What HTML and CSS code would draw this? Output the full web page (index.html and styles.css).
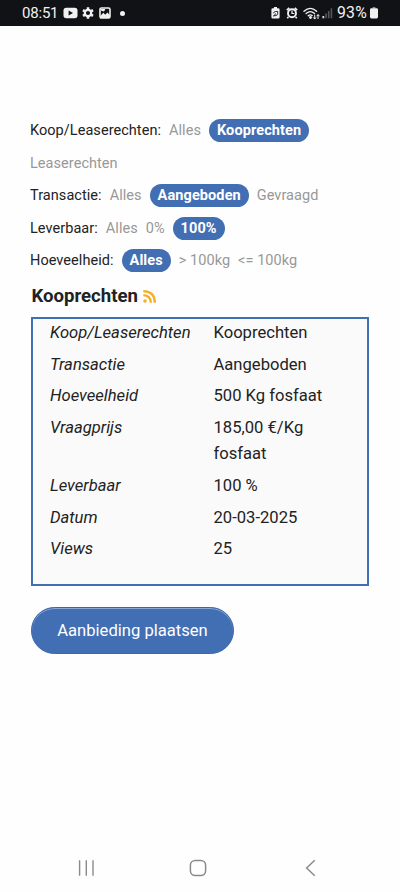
FILE: index.html
```html
<!DOCTYPE html>
<html lang="nl">
<head>
<meta charset="utf-8">
<title>Kooprechten</title>
<link rel="stylesheet" href="styles.css">
</head>
<body>
<div class="screen">
  <header class="status">
    <span class="clock">08:51</span>
    <svg class="i-video" width="15" height="12" viewBox="0 0 15 12"><rect x=".5" y=".7" width="14" height="10.6" rx="2.8" fill="#f1f1f1"/><path d="M5.6 3.5 10 6 5.6 8.5Z" fill="#111215"/></svg>
    <svg class="i-gear" width="12" height="12" viewBox="0 0 12 12"><circle cx="6" cy="6" r="3.2" fill="none" stroke="#f1f1f1" stroke-width="2.2"/><g stroke="#f1f1f1" stroke-width="2.6"><path d="M6 .2v2M6 9.8v2M.98 3.1l1.7 1M9.3 7.9l1.7 1M.98 8.9l1.7-1M9.3 4.1l1.7-1"/></g></svg>
    <svg class="i-image" width="12" height="12" viewBox="0 0 12 12"><rect x="1" y="1" width="10" height="10" rx="1.4" fill="none" stroke="#f1f1f1" stroke-width="1.6"/><path d="M1.2 9.2 4.3 5.8l2 2 2.1-2.3 2.4 2.6V11H1.2Z" fill="#f1f1f1"/><path d="M2 2h4v1.2L4.4 4.6 2 3.4Z" fill="#f1f1f1"/></svg>
    <span class="dot"></span>
    <div class="status-right">
      <svg width="9" height="12" viewBox="0 0 9 12"><path d="M3 0h3v1.2h1.2Q8.6 1.2 8.6 2.6v7.6q0 1.4-1.4 1.4H1.8Q.4 11.6.4 10.2V2.6q0-1.4 1.4-1.4H3Z" fill="#f1f1f1"/><path d="M2.4 6.3Q3 4.5 4.6 4.5H6.7V6.7Q6.4 8.7 4.2 8.7H2.6M2.2 9.3 5 6.5" fill="none" stroke="#111215" stroke-width=".9"/></svg>
      <svg class="i-alarm" width="12" height="12" viewBox="0 0 12 12"><circle cx="6" cy="6.3" r="4" fill="#111215" stroke="#f1f1f1" stroke-width="1.9"/><path d="M.8 3.2 3.3 1M11.2 3.2 8.7 1M2.3 10l-1 1.3M9.7 10l1 1.3" stroke="#f1f1f1" stroke-width="1.7"/><path d="M6 3.8v2.7h2.3" fill="none" stroke="#f1f1f1" stroke-width="1.2"/></svg>
      <svg class="i-wifi" width="17" height="13" viewBox="0 0 17 13"><g fill="none" stroke="#f1f1f1" stroke-width="1.35" stroke-linecap="round"><path d="M1 4.2Q7.3-1.4 13.6 4.2M3.1 6.5Q7.3 2.8 11.5 6.5M5.2 8.8Q7.3 7 9.1 8.6"/></g><circle cx="7.5" cy="10.5" r="1.4" fill="#f1f1f1"/><path d="M11.7 7.8v4M10.2 10.4l1.5 1.7 1.3-1.7M15 12V7.8M13.7 9.2 15 7.5l1.4 1.7" fill="none" stroke="#f1f1f1" stroke-width="1"/></svg>
      <svg class="i-signal" width="11" height="12" viewBox="0 0 11 12"><path d="M.4 9h1.8v2.3H.4Z" fill="#ddd"/><path d="M3.2 6.6h1.6v4.7H3.2ZM5.9 4.1h1.6v7.2H5.9ZM8.6 1.2h1.6v10.1H8.6Z" fill="#55565a"/></svg>
      <span class="percent">93%</span>
      <svg class="i-battery" width="8" height="12" viewBox="0 0 8 12"><path d="M2.6 0h2.8v1.5H2.6Z" fill="#8a8b8d"/><rect y="1.3" width="8" height="10.2" rx="1.4" fill="#f1f1f1"/></svg>
    </div>
  </header>

  <main class="content">
    <div class="filter"><span class="name">Koop/Leaserechten:</span><a>Alles</a><a class="on">Kooprechten</a><a>Leaserechten</a></div>
    <div class="filter"><span class="name">Transactie:</span><a>Alles</a><a class="on">Aangeboden</a><a>Gevraagd</a></div>
    <div class="filter"><span class="name">Leverbaar:</span><a>Alles</a><a>0%</a><a class="on">100%</a></div>
    <div class="filter"><span class="name">Hoeveelheid:</span><a class="on">Alles</a><a>&gt; 100kg</a><a>&lt;= 100kg</a></div>

    <h1><span>Kooprechten</span>
      <svg width="14" height="13" viewBox="0 0 14 13"><circle cx="2" cy="11" r="1.8" fill="#f5ae27"/><path d="M.3 5.1Q7.6 5.3 7.9 12.8M.3 1.2Q11.7 1.4 11.9 12.8" fill="none" stroke="#f5ae27" stroke-width="2.3"/></svg>
    </h1>

    <dl class="offer">
      <dt>Koop/Leaserechten</dt><dd>Kooprechten</dd>
      <dt>Transactie</dt><dd>Aangeboden</dd>
      <dt>Hoeveelheid</dt><dd>500 Kg fosfaat</dd>
      <dt>Vraagprijs</dt><dd>185,00 €/Kg fosfaat</dd>
      <dt>Leverbaar</dt><dd>100 %</dd>
      <dt>Datum</dt><dd>20-03-2025</dd>
      <dt>Views</dt><dd>25</dd>
    </dl>

    <button class="place">Aanbieding plaatsen</button>
  </main>

  <nav class="nav">
    <svg width="18" height="18" viewBox="0 0 18 18"><path d="M1.6 1.2v15.6M8.3 1.2v15.6M15 1.2v15.6" stroke="#8a8a8a" stroke-width="1.4"/></svg>
    <svg width="18" height="18" viewBox="0 0 18 18"><rect x="1.4" y="1.4" width="15.2" height="15.2" rx="4.8" fill="none" stroke="#8a8a8a" stroke-width="1.5"/></svg>
    <svg width="18" height="18" viewBox="0 0 18 18"><path d="M13.8 1.2 5.6 9l8.2 7.8" fill="none" stroke="#8a8a8a" stroke-width="1.5"/></svg>
  </nav>
</div>
</body>
</html>
```
FILE: styles.css
```css
* { box-sizing: border-box; }
body { margin: 0; background: #fefefe; color: #222; font-family: Roboto, "Liberation Sans", sans-serif; }
.screen { height: 892px; display: flex; flex-direction: column; overflow: hidden; }
.status { height: 26px; flex: none; background: #111215; color: #f1f1f1; display: flex; align-items: center; padding: 0 22px 0 22px; font-size: 15px; line-height: 26px; }
.clock { width: 40.5px; letter-spacing: -.2px; }
.i-gear { margin-left: 4px; }
.i-image { margin-left: 5px; }
.dot { width: 5px; height: 5px; border-radius: 50%; background: #f1f1f1; margin-left: 9.5px; }
.status-right { margin-left: auto; display: flex; align-items: center; }
.i-alarm { margin-left: 6px; }
.i-wifi { margin-left: 5px; }
.i-signal { margin-left: 2px; }
.percent { margin-left: 4px; width: 31px; font-size: 15.8px; letter-spacing: .2px; }
.i-battery { margin-left: 2px; }
.content { flex: 1; padding: 88.7px 30px 0; }
.filter { display: flex; flex-wrap: wrap; align-items: center; column-gap: 8px; font-size: 14.5px; letter-spacing: .05px; }
.filter > * { line-height: 23px; margin: 4.75px 0; white-space: nowrap; }
.filter a { color: #989898; }
.filter .on { background: #426eb4; color: #fff; font-weight: 700; padding: 0 8px; border-radius: 12px; letter-spacing: .1px; }
h1 { display: flex; align-items: center; gap: 5px; margin: 6px 0 8.3px 1.4px; font-size: 18.6px; line-height: 26px; font-weight: 700; }
.offer { margin: 0 0 0 1px; width: 338px; height: 269px; border: 2px solid #426eb4; background: #fafafa; display: grid; grid-template-columns: 163.5px 130px; align-content: start; row-gap: 5.1px; padding: .7px 17px 0; font-size: 16.6px; line-height: 26.5px; }
.offer dt { font-style: italic; }
.offer dd { margin: 0; }
.place { display: block; margin: 21px 0 0 1px; width: 203px; height: 47px; border: 1px solid #3d65a2; border-radius: 24px; background: #426eb4; box-shadow: inset 0 1px 0 #8ba8d4; color: #fff; font: 16.6px/45px Roboto, "Liberation Sans", sans-serif; padding: 0; }
.nav { height: 48px; flex: none; display: flex; justify-content: space-between; align-items: center; padding: 0 81px 0 78px; }
.nav svg:nth-child(2) { margin-left: -1.5px; }
```
